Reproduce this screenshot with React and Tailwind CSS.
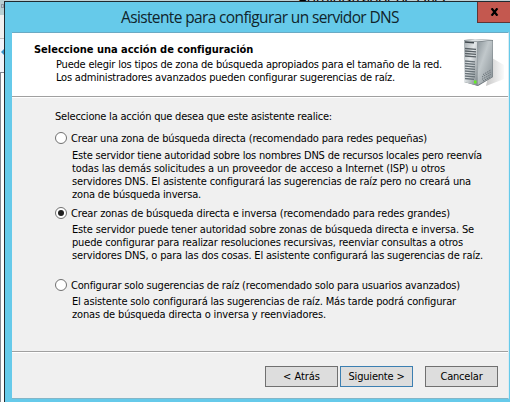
import { useLayoutEffect, useRef, useState } from 'react';

// One line of text whose tracking is adjusted to fill a given width.
function Line({ width, className = '', children }) {
  const ref = useRef(null);
  const [spacing, setSpacing] = useState(0);
  useLayoutEffect(() => {
    const natural = ref.current.getBoundingClientRect().width;
    setSpacing((width - natural) / children.length);
  }, []);
  return (
    <div className={`whitespace-nowrap ${className}`}>
      <span ref={ref} style={{ letterSpacing: `${spacing}px` }}>{children}</span>
    </div>
  );
}

function Radio({ checked, width, label }) {
  return (
    <div className="flex h-[13px] items-start gap-[4px]">
      <svg className="h-[12px] w-[12px] shrink-0" viewBox="0 0 12 12">
        <circle cx="6" cy="6" r="5.5" fill="#fff" stroke="#707070" />
        {checked && <circle cx="6" cy="6" r="3" fill="#202020" />}
      </svg>
      <Line width={width}>{label}</Line>
    </div>
  );
}

function Button({ children, width, className }) {
  return (
    <button className={`flex h-[21px] w-[73px] items-center justify-center border bg-[#dddddd] ${className}`}>
      <Line width={width}>{children}</Line>
    </button>
  );
}

function Server() {
  return (
    <svg className="h-[52px] w-[42px]" viewBox="0 0 42 52">
      <defs>
        <linearGradient id="front" x1="0" y1="0" x2="1" y2="1">
          <stop offset="0" stopColor="#a3aaae" />
          <stop offset=".45" stopColor="#e4e8ea" />
          <stop offset="1" stopColor="#7e878c" />
        </linearGradient>
        <linearGradient id="side" x1="0" y1="0" x2="1" y2="1">
          <stop offset="0" stopColor="#8c959a" />
          <stop offset=".4" stopColor="#c1c8cb" />
          <stop offset="1" stopColor="#858e93" />
        </linearGradient>
        <linearGradient id="shade" x1="0" x2="1">
          <stop offset="0" stopColor="#c9c9c9" />
          <stop offset="1" stopColor="#fafafa" />
        </linearGradient>
      </defs>
      <path d="M22 48L40 41V27L28 20Z" fill="url(#shade)" />
      <path d="M0 2L11 1L29 2V39L14 48L0 44Z" fill="#666f74" />
      <path d="M13 4L28.6 2.5V38.7L13.5 47.3Z" fill="url(#side)" />
      <path d="M0 2.3L13 4V47.5L0 44Z" fill="url(#front)" />
      <path d="M1 2.3L11 1L28 2L13 3.6Z" fill="#dce1e3" />
      <path d="M1 4L10 4.8" stroke="#3f474c" strokeWidth="1.5" />
      <path d="M1 10.5L12 11.3M1 13L12 13.8M1 15.5L12 16.3M1 18L12 18.8" stroke="#596166" strokeWidth="1.3" />
      <path d="M1 23L11 23.8M1 25.5L11 26.3M1 28L11 28.8M1 30.5L11 31.3M1 33L11 33.8M1 35.5L11 36.3M1 38L11 38.8M1 40.5L10 41.3" stroke="#687278" strokeWidth="1.3" />
      <path d="M18 39L27 34M18 41.3L27 36.3M19 43L26 39M19 36.6L26.5 32.2" stroke="#596268" strokeDasharray="1.4 1" strokeWidth=".8" />
      <rect x="10" y="42.5" width="2.5" height="3" fill="#63ee25" />
    </svg>
  );
}

export default function App() {
  return (
    <div className="flex h-[402px] w-[510px] overflow-hidden bg-white text-[11px] leading-[13px] text-black [font-family:'DejaVu_Sans_Condensed','DejaVu_Sans',sans-serif] [font-stretch:condensed]">
      <div className="flex w-[4px] shrink-0 flex-col">
        <div className="h-[15px] bg-[#b9cfd3] pt-[4px]"><div className="ml-[1px] h-[4px] border border-[#9099a5]" /></div>
        <div className="h-[24px] border-b border-[#c0c0c0] bg-[#f0f0f0]" />
        <div className="flex h-[33px] items-center overflow-hidden bg-[#f1f4fa]">
          <svg className="mt-[-7px] h-[6px] w-[4px]" viewBox="0 0 4 6"><path d="M4 0L1 3L4 6Z" fill="#3b93c8" /></svg>
        </div>
        <div className="flex-1 border-l border-t border-[#828790] bg-[#fdfdfd]" />
      </div>
      <div className="flex min-w-0 flex-1 flex-col">
        <div className="relative h-px shrink-0 overflow-hidden bg-[#bfd0d4]">
          <div className="absolute bottom-[-4px] left-[294px] text-[15px] leading-[14px] [font-family:'Open_Sans',sans-serif] [font-stretch:normal]">
            <Line width={147}>Administrador de DNS</Line>
          </div>
        </div>
        <div className="flex min-h-0 flex-1 flex-col border-l border-t border-[#202a30] bg-[#66caea]">
          <header className="flex h-[30px] shrink-0 items-start">
            <Line width={278} className="ml-[116px] mt-[5px] text-[15.5px] leading-[21px] text-[#10252c] [font-family:'Open_Sans',sans-serif] [font-stretch:normal]">Asistente para configurar un servidor DNS</Line>
            <div className="ml-auto flex h-[21px] w-[33px] items-center justify-center border-b border-l border-[#5e3535] bg-[#c4584f]">
              <svg className="h-[8px] w-[9px]" viewBox="0 0 9 8"><path d="M1.6 .3L7.4 7.7M7.4 .3L1.6 7.7" stroke="#000" strokeWidth="2.2" /></svg>
            </div>
          </header>
          <main className="ml-[7px] mr-[1px] flex h-[367px] flex-col border-b border-r border-t border-b-[#82b6c8] border-r-[#dcecf2] border-t-[#6aaac4] bg-[#f0f0f0]">
            <section className="flex h-[63px] shrink-0 bg-white">
              <div className="w-[452px] pl-[22px] pt-[10px]">
                <Line width={219} className="font-bold">Seleccione una acción de configuración</Line>
                <div className="pl-[22px] pt-[2px]">
                  <Line width={386}>Puede elegir los tipos de zona de búsqueda apropiados para el tamaño de la red.</Line>
                  <Line width={339}>Los administradores avanzados pueden configurar sugerencias de raíz.</Line>
                </div>
              </div>
              <div className="pt-[5px]"><Server /></div>
            </section>
            <div className="h-[2px] shrink-0 border-b border-t border-b-white border-t-[#a0a0a0]" />
            <section className="flex h-[253px] shrink-0 flex-col pl-[43px] pt-[12px]">
              <Line width={277}>Seleccione la acción que desea que este asistente realice:</Line>
              <div className="pt-[9px]">
                <Radio width={356} label="Crear una zona de búsqueda directa (recomendado para redes pequeñas)" />
                <div className="pl-[17px] pt-[4px]">
                  <Line width={410}>Este servidor tiene autoridad sobre los nombres DNS de recursos locales pero reenvía</Line>
                  <Line width={373}>todas las demás solicitudes a un proveedor de acceso a Internet (ISP) u otros</Line>
                  <Line width={399}>servidores DNS. El asistente configurará las sugerencias de raíz pero no creará una</Line>
                  <Line width={129}>zona de búsqueda inversa.</Line>
                </div>
              </div>
              <div className="pt-[6px]">
                <Radio checked width={379} label="Crear zonas de búsqueda directa e inversa (recomendado para redes grandes)" />
                <div className="pl-[17px] pt-[3px]">
                  <Line width={402}>Este servidor puede tener autoridad sobre zonas de búsqueda directa e inversa. Se</Line>
                  <Line width={391}>puede configurar para realizar resoluciones recursivas, reenviar consultas a otros</Line>
                  <Line width={411}>servidores DNS, o para las dos cosas. El asistente configurará las sugerencias de raíz.</Line>
                </div>
              </div>
              <div className="pt-[17px]">
                <Radio width={389} label="Configurar solo sugerencias de raíz (recomendado solo para usuarios avanzados)" />
                <div className="pl-[17px] pt-[3px]">
                  <Line width={384}>El asistente solo configurará las sugerencias de raíz. Más tarde podrá configurar</Line>
                  <Line width={254}>zonas de búsqueda directa o inversa y reenviadores.</Line>
                </div>
              </div>
            </section>
            <div className="h-[2px] shrink-0 border-b border-t border-b-white border-t-[#a0a0a0]" />
            <footer className="flex justify-end pr-[10px] pt-[13px]">
              <Button width={37} className="border-[#707070]">&lt; Atrás</Button>
              <Button width={56} className="ml-[2px] border-[#3c7fb1]">Siguiente &gt;</Button>
              <Button width={42} className="ml-[12px] border-[#707070]">Cancelar</Button>
            </footer>
          </main>
        </div>
      </div>
    </div>
  );
}
